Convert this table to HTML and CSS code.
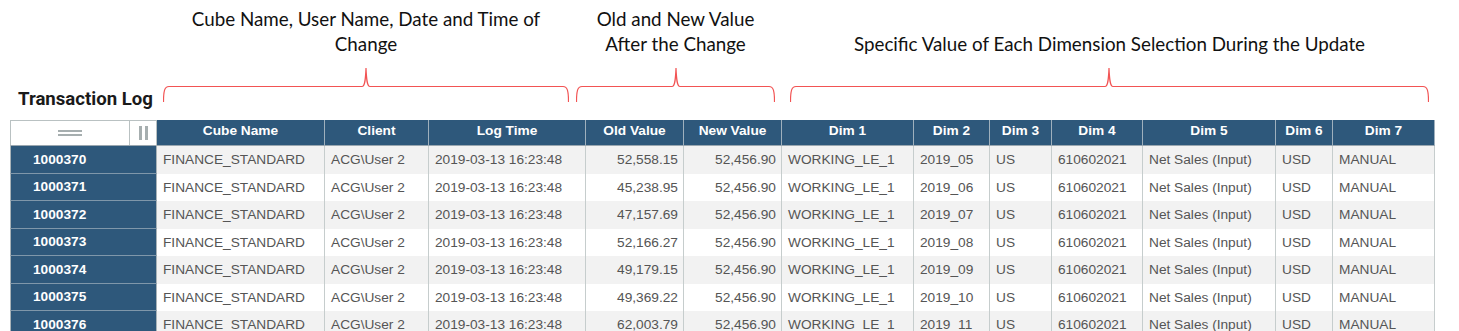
FILE: index.html
```html
<!DOCTYPE html>
<html lang="en">
<head>
<meta charset="utf-8">
<title>Transaction Log</title>
<link rel="stylesheet" href="styles.css">
</head>
<body>
<div class="top">
  <h1 class="title">Transaction Log</h1>
  <div class="note n1">
    <p class="label">Cube Name, User Name, Date and Time of<br>Change</p>
    <svg class="brace" width="406" height="36" viewBox="0 0 406 36"><path d="M0.5,36 C0.5,25 1.5,20.5 6,20.5 H199 C202,20.5 202.5,14 203,2 C203.5,14 204,20.5 207,20.5 H400 C404.5,20.5 405.5,25 405.5,36"/></svg>
  </div>
  <div class="note n2">
    <p class="label">Old and New Value<br>After the Change</p>
    <svg class="brace" width="199" height="36" viewBox="0 0 199 36"><path d="M0.5,36 C0.5,25 1.5,20.5 6,20.5 H96 C99,20.5 99.5,14 100,2 C100.5,14 101,20.5 104,20.5 H193 C197.5,20.5 198.5,25 198.5,36"/></svg>
  </div>
  <div class="note n3">
    <p class="label">Specific Value of Each Dimension Selection During the Update</p>
    <svg class="brace" width="639" height="36" viewBox="0 0 639 36"><path d="M0.5,36 C0.5,25 1.5,20.5 6,20.5 H315 C318,20.5 318.5,14 319,2 C319.5,14 320,20.5 323,20.5 H633 C637.5,20.5 638.5,25 638.5,36"/></svg>
  </div>
</div>

<div class="grid">
  <div class="corner">
    <div class="corner-main"><span class="eq"></span></div>
    <div class="corner-side"><span class="pause"></span></div>
  </div>
  <div class="th">Cube Name</div>
  <div class="th">Client</div>
  <div class="th">Log Time</div>
  <div class="th">Old Value</div>
  <div class="th">New Value</div>
  <div class="th">Dim 1</div>
  <div class="th">Dim 2</div>
  <div class="th">Dim 3</div>
  <div class="th">Dim 4</div>
  <div class="th">Dim 5</div>
  <div class="th">Dim 6</div>
  <div class="th">Dim 7</div>

  <div class="rh">1000370</div>
  <div class="td odd">FINANCE_STANDARD</div><div class="td odd">ACG\User 2</div><div class="td odd">2019-03-13 16:23:48</div><div class="td odd num">52,558.15</div><div class="td odd num">52,456.90</div><div class="td odd">WORKING_LE_1</div><div class="td odd">2019_05</div><div class="td odd">US</div><div class="td odd">610602021</div><div class="td odd">Net Sales (Input)</div><div class="td odd">USD</div><div class="td odd">MANUAL</div>

  <div class="rh">1000371</div>
  <div class="td">FINANCE_STANDARD</div><div class="td">ACG\User 2</div><div class="td">2019-03-13 16:23:48</div><div class="td num">45,238.95</div><div class="td num">52,456.90</div><div class="td">WORKING_LE_1</div><div class="td">2019_06</div><div class="td">US</div><div class="td">610602021</div><div class="td">Net Sales (Input)</div><div class="td">USD</div><div class="td">MANUAL</div>

  <div class="rh">1000372</div>
  <div class="td odd">FINANCE_STANDARD</div><div class="td odd">ACG\User 2</div><div class="td odd">2019-03-13 16:23:48</div><div class="td odd num">47,157.69</div><div class="td odd num">52,456.90</div><div class="td odd">WORKING_LE_1</div><div class="td odd">2019_07</div><div class="td odd">US</div><div class="td odd">610602021</div><div class="td odd">Net Sales (Input)</div><div class="td odd">USD</div><div class="td odd">MANUAL</div>

  <div class="rh">1000373</div>
  <div class="td">FINANCE_STANDARD</div><div class="td">ACG\User 2</div><div class="td">2019-03-13 16:23:48</div><div class="td num">52,166.27</div><div class="td num">52,456.90</div><div class="td">WORKING_LE_1</div><div class="td">2019_08</div><div class="td">US</div><div class="td">610602021</div><div class="td">Net Sales (Input)</div><div class="td">USD</div><div class="td">MANUAL</div>

  <div class="rh">1000374</div>
  <div class="td odd">FINANCE_STANDARD</div><div class="td odd">ACG\User 2</div><div class="td odd">2019-03-13 16:23:48</div><div class="td odd num">49,179.15</div><div class="td odd num">52,456.90</div><div class="td odd">WORKING_LE_1</div><div class="td odd">2019_09</div><div class="td odd">US</div><div class="td odd">610602021</div><div class="td odd">Net Sales (Input)</div><div class="td odd">USD</div><div class="td odd">MANUAL</div>

  <div class="rh">1000375</div>
  <div class="td">FINANCE_STANDARD</div><div class="td">ACG\User 2</div><div class="td">2019-03-13 16:23:48</div><div class="td num">49,369.22</div><div class="td num">52,456.90</div><div class="td">WORKING_LE_1</div><div class="td">2019_10</div><div class="td">US</div><div class="td">610602021</div><div class="td">Net Sales (Input)</div><div class="td">USD</div><div class="td">MANUAL</div>

  <div class="rh">1000376</div>
  <div class="td odd">FINANCE_STANDARD</div><div class="td odd">ACG\User 2</div><div class="td odd">2019-03-13 16:23:48</div><div class="td odd num">62,003.79</div><div class="td odd num">52,456.90</div><div class="td odd">WORKING_LE_1</div><div class="td odd">2019_11</div><div class="td odd">US</div><div class="td odd">610602021</div><div class="td odd">Net Sales (Input)</div><div class="td odd">USD</div><div class="td odd">MANUAL</div>
</div>
</body>
</html>
```

FILE: styles.css
```css
html, body {
  margin: 0;
  padding: 0;
  background: #ffffff;
}
body {
  overflow: hidden;
  font-family: "Liberation Sans", Arial, sans-serif;
}

.top {
  display: flex;
  align-items: flex-start;
  height: 120px;
}
.title {
  box-sizing: border-box;
  width: 163px;
  margin: 0;
  padding: 88px 0 0 18px;
  font-family: Roboto, "Liberation Sans", sans-serif;
  font-weight: 700;
  font-size: 18.6px;
  line-height: 22px;
  color: #1a1a1a;
  white-space: nowrap;
}
.note {
  display: flex;
  flex-direction: column;
  align-items: center;
}
.n1 { width: 406px; }
.n2 { width: 199px; margin-left: 7px; }
.n3 { width: 639px; margin-left: 15px; }
.label {
  box-sizing: border-box;
  height: 56px;
  margin: 0;
  padding-top: 6px;
  display: flex;
  flex-direction: column;
  justify-content: flex-end;
  text-align: center;
  font-family: Lato, "Open Sans", sans-serif;
  font-size: 18.8px;
  line-height: 25px;
  color: #111;
  white-space: nowrap;
}
.brace {
  display: block;
  margin-top: 10px;
  align-self: stretch;
}
.brace path {
  fill: none;
  stroke: #f25454;
  stroke-width: 1.2;
}

.grid {
  display: grid;
  grid-template-columns: 147px 168px 104px 157px 98px 98px 132px 76px 62px 91px 133px 57px 102px;
  grid-template-rows: 26px;
  grid-auto-rows: 27.5px;
  width: 1425px;
  margin-left: 10px;
  font-size: 13.7px;
}

.corner {
  box-sizing: border-box;
  display: flex;
  background: #ffffff;
  border: 1px solid #b9c1c2;
  border-bottom-color: #9aa7b0;
}
.corner-main {
  flex: 1;
  display: flex;
  align-items: center;
  justify-content: center;
  border-right: 1px solid #b9c1c2;
}
.eq {
  display: block;
  width: 24px;
  height: 2px;
  border-top: 2px solid #a6aeaf;
  border-bottom: 2px solid #a6aeaf;
  background: #fff;
}
.corner-side {
  width: 26px;
  display: flex;
  align-items: center;
  justify-content: center;
}
.pause {
  display: block;
  width: 3px;
  height: 14px;
  border-left: 3px solid #a6aeaf;
  border-right: 3px solid #a6aeaf;
}

.th {
  box-sizing: border-box;
  display: flex;
  align-items: center;
  justify-content: center;
  padding-bottom: 5px;
  background: #2e587b;
  color: #ffffff;
  font-weight: 700;
  border-right: 1px solid #9fb0bd;
  border-bottom: 1px solid #9aa7b0;
  white-space: nowrap;
}
.th:last-child { border-right-color: #b9c1c2; }

.rh {
  box-sizing: border-box;
  display: flex;
  align-items: center;
  padding-left: 22px;
  background: #2e587b;
  color: #ffffff;
  font-weight: 700;
  border-left: 1px solid #a9b3b8;
  border-right: 1px solid #a9b3b8;
  border-bottom: 1px solid #7f97aa;
}

.td {
  box-sizing: border-box;
  display: flex;
  align-items: center;
  padding: 0 6px;
  background: #ffffff;
  color: #555555;
  border-right: 1px solid #c6cdcd;
  white-space: nowrap;
  overflow: hidden;
}
.td.odd { background: #f2f2f2; }
.td.num { justify-content: flex-end; padding-right: 5px; }
```
